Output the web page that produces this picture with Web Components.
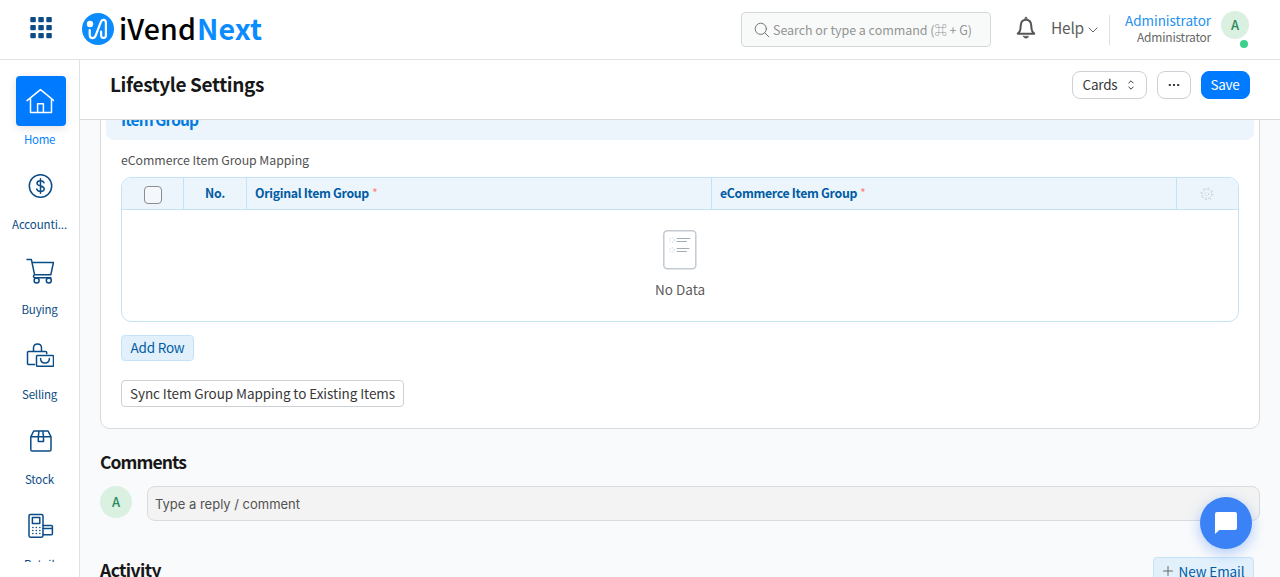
<!DOCTYPE html>
<html lang="en">
<head>
<meta charset="utf-8">
<title>Lifestyle Settings</title>
<style>
    html, body { margin: 0; height: 100%; overflow: hidden; }
    body {
        font-family: "Noto Sans CJK SC", "Noto Sans", sans-serif;
        font-size: 13px;
        line-height: 20px;
        color: #383838;
        background: #f9fafc;
    }
</style>
</head>
<body>
<app-shell>
    <app-header slot="header"></app-header>
    <side-bar slot="side">
        <nav-item icon="home" width="31" active>Home</nav-item>
        <nav-item icon="dollar" width="55">Accounti...</nav-item>
        <nav-item icon="cart" width="36">Buying</nav-item>
        <nav-item icon="bags" width="35">Selling</nav-item>
        <nav-item icon="box" width="29">Stock</nav-item>
        <nav-item icon="pos" width="31">Retail</nav-item>
    </side-bar>
    <page-head slot="head">
        <fit-text width="154">Lifestyle Settings</fit-text>
        <ui-button slot="actions" kind="round" style="width:75px;padding-right:3px"><fit-text width="35">Cards</fit-text><ui-icon name="sort"></ui-icon></ui-button>
        <ui-button slot="actions" kind="round" style="width:34px"><ui-icon name="dots"></ui-icon></ui-button>
        <ui-button slot="actions" kind="primary" style="width:49px;padding-right:1px"><fit-text width="29">Save</fit-text></ui-button>
    </page-head>
    <form-section>
        <fit-text slot="title" width="77">Item Group</fit-text>
        <fit-text slot="label" width="188">eCommerce Item Group Mapping</fit-text>
        <data-grid></data-grid>
        <ui-button slot="buttons" kind="soft" style="width:73px"><fit-text width="54">Add Row</fit-text></ui-button>
        <ui-button slot="buttons" kind="plain" style="width:283px"><fit-text width="265">Sync Item Group Mapping to Existing Items</fit-text></ui-button>
    </form-section>
    <page-footer></page-footer>
    <chat-button slot="chat"></chat-button>
</app-shell>

<script>
const ICONS = {
    home: [28, 28, `<path d="M1 13.6 14.5 2.6 28 13.6M4.5 11.500v14.100h21V11.500M11.6 25.6v-8.8h5.8v8.8" />`],
    dollar: [28, 28, `<circle cx="14.5" cy="14" r="11.2"/><path d="M18 10.8c-.5-1.3-1.8-2-3.5-2-2 0-3.5 1-3.5 2.5 0 3.7 7.2 1.8 7.2 5.5 0 1.6-1.6 2.6-3.6 2.6-2 0-3.4-.9-3.8-2.4M14.5 6.8v14.4"/>`],
    cart: [28, 28, `<path d="M1 2.6h4.4l3.2 15.2h16.2L27.4 5.6H6M8.6 17.8C7 18 7 20.8 9 20.8h15.8"/><circle cx="10.6" cy="23.4" r="2.5"/><circle cx="22.8" cy="23.4" r="2.5"/>`],
    bags: [28, 28, `<path d="M8.5 22.6H2.6c-.7 0-1.1-.4-1.1-1.1V10.6c0-.7.4-1.1 1.1-1.1h17c.7 0 1.1.4 1.1 1.1v1.2M7.5 9.5V6c0-5.4 8-5.4 8 0v3.5"/><rect x="10.5" y="13.6" width="17" height="10.6" rx=".8"/><path d="M14.6 16.4c.2 6 8.6 6 8.8 0"/>`],
    box: [28, 28, `<path d="M4.8 9.8 7.7 4h14.4l2.9 5.8v12.6c0 .9-.5 1.6-1.4 1.6H6.200c-.9 0-1.4-.7-1.4-1.6zM4.8 9.8H25M13 4l-.7 5.6v5h5.200v-5L16.800 4"/>`],
    pos: [28, 28, `<rect x="3" y="2.6" width="14" height="22.6" rx="1.4"/><rect x="6.4" y="5.6" width="7.4" height="6"/><path d="M17 13.4h8.4c.6 0 1 .4 1 1v7.4c0 .6-.4 1-1 1H17M17 16.4h9.4"/><path stroke-dasharray=".1 3.400" d="M6.8 15.4h7.500M6.8 18.4h7.500M6.8 21.6h7.500"/>`],
    grid: [22, 22, `<g fill="currentColor" stroke="none">${[0, 8, 16].map(y => [0, 8, 16].map(x => `<rect x="${x + .3}" y="${y}" width="5.5" height="5.2" rx="1"/>`).join('')).join('')}</g>`],
    search: [16, 16, `<circle cx="6.8" cy="6.8" r="5.6"/><path d="m10.8 10.8 4 4"/>`],
    bell: [20, 24, `<path d="M1.8 17.7h16.4c-1.8-1.2-2.4-2.6-2.6-4.6l-.4-4C14.9 5.6 12.700 3.7 10 3.7S5.100 5.6 4.800 9.1l-.4 4c-.2 2-.8 3.4-2.600 4.6z" stroke-width="2"/><path d="M8.700 2.400a1.300 1.300 0 0 1 2.600 0zM7.300 20.200h5.400c-.4 1.300-1.400 2-2.700 2s-2.300-.7-2.700-2z" fill="currentColor" stroke-width=".5"/>`],
    down: [10, 6, `<path d="m1 1 4 4 4-4"/>`],
    sort: [6, 10, `<path d="m.8 3 2.200-2.200L5.200 3M.8 7 3 9.200 5.200 7"/>`],
    dots: [12, 4, `<g fill="currentColor" stroke="none"><rect x=".8" y="1" width="2" height="2"/><rect x="5" y="1" width="2" height="2"/><rect x="9.200" y="1" width="2" height="2"/></g>`],
    plus: [10, 10, `<path d="M5 .5v9M.5 5h9"/>`],
    gear: [14, 14, `<g stroke-linecap="butt"><circle cx="7" cy="7" r="5.800" stroke-dasharray="1.500 3.055"/><circle cx="7" cy="7" r="4.600" stroke-dasharray="1 1.400"/><circle cx="7" cy="7" r="1.700" stroke-dasharray="1 1.670"/></g>`],
    list: [34, 40, `<rect x=".8" y=".8" width="32" height="38" rx="3.500" stroke="#c3cad1" stroke-width="1.500"/><g stroke="#a2adb8"><path d="M14 8.500h13M14 11.500h9.500M14 18.500h12M14 21.500h9.500"/><g stroke="#c3cad1" stroke-linecap="butt"><circle cx="9" cy="10" r="2.200" stroke-dasharray="1 1.300"/><circle cx="9" cy="20" r="2.200" stroke-dasharray="1 1.300"/></g></g>`],
    chat: [22, 22, `<path fill="currentColor" stroke="none" d="M2 0h18a2 2 0 0 1 2 2v14a2 2 0 0 1-2 2H4.400L0 22V2a2 2 0 0 1 2-2z"/>`],
    logo: [32, 32, `<circle cx="16" cy="16" r="16" fill="#0a8cff" stroke="none"/><circle cx="8" cy="11" r="3.200" fill="#fff" stroke="none"/><path stroke="#fff" stroke-width="2.200" d="M7.700 17v4.500c0 4.800 4.500 4.400 6 1l5.200-13.600c1.300-3.200 5-2.500 5 1V22.500c0 3-4.800 3.500-4.800 0v-4"/>`]
};

class UiIcon extends HTMLElement {
    constructor() {
        super();
        this.attachShadow({ mode: "open" });
    }

    connectedCallback() {
        const [w, h, body] = ICONS[this.getAttribute("name")];
        this.shadowRoot.innerHTML = `
        <style>
            :host { display: block; flex: none; width: ${w}px; height: ${h}px; }
            svg { display: block; fill: none; stroke: currentColor; stroke-width: var(--stroke, 1); stroke-linecap: round; stroke-linejoin: round; }
        </style>
        <svg width="${w}" height="${h}" viewBox="0 0 ${w} ${h}">${body}</svg>`;
    }
}

// One line of text, tracked so that it fills the given width
class FitText extends HTMLElement {
    constructor() {
        super();
        this.attachShadow({ mode: "open" }).innerHTML = `
        <style>
            :host { display: block; flex: none; white-space: nowrap; }
            span { display: inline-block; transform: translateY(var(--rise, -1px)); }
        </style>
        <span><slot></slot></span>`;
    }

    connectedCallback() {
        const width = Number(this.getAttribute("width"));
        const span = this.shadowRoot.querySelector("span");
        const natural = span.getBoundingClientRect().width;
        const count = this.textContent.length;
        this.style.width = `${width}px`;
        span.style.letterSpacing = `${(width - natural) / count}px`;
    }
}

class UserAvatar extends HTMLElement {
    constructor() {
        super();
        this.attachShadow({ mode: "open" }).innerHTML = `
        <style>
            :host {
                display: flex;
                flex: none;
                align-items: center;
                justify-content: center;
                width: var(--size, 32px);
                height: var(--size, 32px);
                border-radius: 50%;
                background: #daf0e1;
                color: #2b8a5b;
                font-weight: 500;
                font-size: 13px;
            }
        </style>
        <slot></slot>`;
    }
}

class UiButton extends HTMLElement {
    constructor() {
        super();
        this.attachShadow({ mode: "open" }).innerHTML = `
        <style>
            :host {
                display: flex;
                flex: none;
                box-sizing: border-box;
                align-items: center;
                justify-content: center;
                height: 28px;
                border: 1px solid #ced0d6;
                border-radius: 8px;
                background: #fff;
                font-size: 13.500px;
                gap: 10px;
            }
            :host([kind="primary"]) { background: #007bff; border-color: #007bff; color: #fff; }
            :host([kind="soft"]) { height: 26px; border-radius: 4px; border-color: #c4e3f8; background: #e2f0fc; color: #005ca3; }
            :host([kind="plain"]) { height: 27px; border-radius: 4px; }
        </style>
        <slot></slot>`;
    }
}

class AppHeader extends HTMLElement {
    constructor() {
        super();
        this.attachShadow({ mode: "open" }).innerHTML = `
        <style>
            :host {
                display: flex;
                box-sizing: border-box;
                height: 60px;
                padding: 0 31px 0 30px;
                border-bottom: 1px solid #e2e2e4;
                background: #fff;
            }
            .apps { color: #0b4c86; margin-top: 17px; }
            .logo { margin: 13px 5px 0 30px; }
            .brand { display: flex; margin-top: 9px; font-size: 28.500px; line-height: 40px; font-weight: 500; color: #000; }
            .brand .next { margin-left: 1px; color: #0a8cff; font-weight: 700; }
            .search {
                --rise: 0;
                display: flex;
                box-sizing: border-box;
                align-items: center;
                gap: 3px;
                width: 250px;
                height: 35px;
                margin: 12px 0 0 auto;
                padding-left: 12px;
                border: 1px solid #d5d8da;
                border-radius: 4px;
                background: #f8fafa;
                color: #949494;
                font-size: 12.500px;
            }
            .search ui-icon { color: #777; }
            .bell { margin: 16px 15px 0 25px; color: #555; }
            .help { margin-top: 18px; color: #5e5e5e; font-size: 15.500px; }
            .down { margin: 27px 11px 0 4px; color: #666; }
            .user {
                display: flex;
                flex-direction: column;
                align-items: flex-end;
                height: 30px;
                margin-top: 15px;
                padding-left: 15px;
                border-left: 1px solid #e0e0e2;
                font-size: 12px;
                line-height: 17px;
                color: #666;
            }
            .user .name { --rise: 0; margin-top: -3px; font-size: 13.500px; line-height: 17px; color: #2490ef; }
            .me { position: relative; margin: 11px 0 0 10px; }
            user-avatar { --size: 28px; }
            .dot { position: absolute; left: 19px; top: 29px; width: 8px; height: 8px; border-radius: 50%; background: #3bd08b; }
        </style>
        <ui-icon class="apps" name="grid"></ui-icon>
        <ui-icon class="logo" name="logo"></ui-icon>
        <div class="brand"><fit-text width="77">iVend</fit-text><fit-text class="next" width="65">Next</fit-text></div>
        <div class="search"><ui-icon name="search"></ui-icon><fit-text width="199">Search or type a command (⌘ + G)</fit-text></div>
        <ui-icon class="bell" name="bell"></ui-icon>
        <fit-text class="help" width="33">Help</fit-text>
        <ui-icon class="down" name="down"></ui-icon>
        <div class="user">
            <fit-text class="name" width="86">Administrator</fit-text>
            <fit-text width="74">Administrator</fit-text>
        </div>
        <div class="me"><user-avatar>A</user-avatar><div class="dot"></div></div>`;
    }
}

class NavItem extends HTMLElement {
    constructor() {
        super();
        this.attachShadow({ mode: "open" });
    }

    connectedCallback() {
        this.shadowRoot.innerHTML = `
        <style>
            :host {
                display: flex;
                flex: none;
                flex-direction: column;
                align-items: center;
                gap: 4px;
                height: 85px;
                color: #0b4c86;
                font-size: 11.500px;
            }
            .tile {
                display: flex;
                align-items: center;
                justify-content: center;
                width: 50px;
                height: 50px;
                margin-left: 2px;
                border-radius: 4px;
                --stroke: 1.500;
            }
            .tile ui-icon { margin-right: 2px; }
            :host([active]) { color: #0a84ff; }
            :host([active]) .tile { background: #007bff; color: #fff; box-shadow: 0 2px 8px rgba(0, 0, 0, .12); }
        </style>
        <div class="tile"><ui-icon name="${this.getAttribute("icon")}"></ui-icon></div>
        <fit-text width="${this.getAttribute("width")}">${this.textContent}</fit-text>`;
    }
}

class SideBar extends HTMLElement {
    constructor() {
        super();
        this.attachShadow({ mode: "open" }).innerHTML = `
        <style>
            :host { display: block; box-sizing: border-box; width: 80px; background: #fff; border-right: 1px solid #e0e2e5; }
            nav { display: flex; flex-direction: column; box-sizing: border-box; height: 502px; padding-top: 16px; overflow: hidden; }
        </style>
        <nav><slot></slot></nav>`;
    }
}

class PageHead extends HTMLElement {
    constructor() {
        super();
        this.attachShadow({ mode: "open" }).innerHTML = `
        <style>
            :host {
                display: flex;
                flex: none;
                box-sizing: border-box;
                justify-content: space-between;
                height: 60px;
                padding: 11px 30px 0;
                border-bottom: 1px solid #d9dbdf;
                background: #fff;
            }
            .title { font-size: 19px; line-height: 28px; font-weight: 700; color: #171717; }
            .actions { display: flex; gap: 10px; }
        </style>
        <div class="title"><slot></slot></div>
        <div class="actions"><slot name="actions"></slot></div>`;
    }
}

class FormSection extends HTMLElement {
    constructor() {
        super();
        this.attachShadow({ mode: "open" }).innerHTML = `
        <style>
            :host {
                display: block;
                box-sizing: border-box;
                height: 339px;
                margin-top: -30px;
                padding: 5px;
                border: 1px solid #d8dadd;
                border-radius: 10px;
                background: #fff;
            }
            .title {
                box-sizing: border-box;
                height: 44px;
                padding: 14px 15px 0;
                border-radius: 8px;
                background: #ecf4fc;
                color: #007be0;
                font-size: 15.500px;
                font-weight: 700;
            }
            .body { padding: 10px 15px 0; }
            .label { --rise: 0; margin-bottom: 7px; color: #525252; font-size: 12.300px; }
            .buttons { display: flex; flex-direction: column; gap: 19px; margin-top: 13px; }
        </style>
        <div class="title"><slot name="title"></slot></div>
        <div class="body">
            <div class="label"><slot name="label"></slot></div>
            <slot></slot>
            <div class="buttons"><slot name="buttons"></slot></div>
        </div>`;
    }
}

class DataGrid extends HTMLElement {
    constructor() {
        super();
        this.attachShadow({ mode: "open" }).innerHTML = `
        <style>
            :host {
                display: block;
                box-sizing: border-box;
                height: 145px;
                border: 1px solid #c4e3f8;
                border-radius: 10px;
                overflow: hidden;
            }
            .head {
                display: grid;
                grid-template-columns: 62px 63px 465px 465px 1fr;
                height: 31px;
                border-bottom: 1px solid #c4e3f8;
                background: #ecf4fc;
                color: #005ca3;
                font-size: 12.300px;
                font-weight: 700;
            }
            .head > div { display: flex; align-items: center; gap: 3px; padding-left: 8px; border-right: 1px solid #c4e3f8; }
            .head > div.mid { justify-content: center; padding: 0; }
            .head > div:last-child { border: 0; }
            .check { width: 16px; height: 16px; margin-top: 3px; border: 1px solid #8d8d8d; border-radius: 4px; background: #f4f7fb; }
            i { margin-top: -1px; color: #ff7a7a; font-style: normal; font-weight: 400; }
            .gear { color: #bcc2c9; }
            .gear ui-icon { margin-right: 1px; }
            .empty { display: flex; flex-direction: column; align-items: center; gap: 10px; padding-top: 20px; color: #5c5c5c; font-size: 13.500px; }
        </style>
        <div class="head">
            <div class="mid"><div class="check"></div></div>
            <div class="mid"><fit-text width="20">No.</fit-text></div>
            <div><fit-text width="114">Original Item Group</fit-text><i>*</i></div>
            <div><fit-text width="137">eCommerce Item Group</fit-text><i>*</i></div>
            <div class="mid gear"><ui-icon name="gear"></ui-icon></div>
        </div>
        <div class="empty"><ui-icon name="list"></ui-icon><fit-text width="50">No Data</fit-text></div>`;
    }
}

class PageFooter extends HTMLElement {
    constructor() {
        super();
        this.attachShadow({ mode: "open" }).innerHTML = `
        <style>
            :host { display: block; padding-top: 22px; }
            .heading { font-size: 17.500px; line-height: 24px; font-weight: 700; color: #171717; }
            .reply { display: flex; gap: 15px; margin-top: 11px; }
            .input {
                --rise: 0;
                flex: 1;
                box-sizing: border-box;
                height: 35px;
                padding: 7px 7px;
                border: 1px solid #d9dbdf;
                border-radius: 8px;
                background: #f3f3f3;
                color: #525252;
                font-family: Inter, sans-serif;
                font-size: 13px;
            }
            .activity { --rise: 0; display: flex; justify-content: space-between; margin-top: 36px; padding-right: 6px; }
            .activity .heading { margin-top: 1px; }
            ui-button { width: 101px; height: 28px; gap: 6px; }
            ui-button ui-icon { color: #666; }
        </style>
        <fit-text class="heading" width="86">Comments</fit-text>
        <div class="reply">
            <user-avatar>A</user-avatar>
            <div class="input"><fit-text width="145">Type a reply / comment</fit-text></div>
        </div>
        <div class="activity">
            <fit-text class="heading" width="61">Activity</fit-text>
            <ui-button kind="soft"><ui-icon name="plus"></ui-icon><fit-text width="66">New Email</fit-text></ui-button>
        </div>`;
    }
}

class ChatButton extends HTMLElement {
    constructor() {
        super();
        this.attachShadow({ mode: "open" }).innerHTML = `
        <style>
            :host {
                position: absolute;
                right: 28px;
                bottom: 28px;
                display: flex;
                align-items: center;
                justify-content: center;
                width: 52px;
                height: 52px;
                border-radius: 50%;
                background: #3b82f6;
                color: #fff;
                box-shadow: 0 4px 14px rgba(59, 130, 246, .4);
            }
        </style>
        <ui-icon name="chat"></ui-icon>`;
    }
}

class AppShell extends HTMLElement {
    constructor() {
        super();
        this.attachShadow({ mode: "open" }).innerHTML = `
        <style>
            :host { display: grid; position: relative; grid-template: 60px 1fr / 80px 1fr; height: 577px; overflow: hidden; }
            header { grid-column: 1 / 3; }
            aside { display: grid; min-height: 0; }
            main { display: flex; flex-direction: column; min-height: 0; }
            .scroll { flex: 1; min-height: 0; padding: 0 20px; overflow: hidden; }
        </style>
        <header><slot name="header"></slot></header>
        <aside><slot name="side"></slot></aside>
        <main>
            <slot name="head"></slot>
            <div class="scroll"><slot></slot></div>
        </main>
        <slot name="chat"></slot>`;
    }
}

customElements.define('app-shell', AppShell);
customElements.define('app-header', AppHeader);
customElements.define('side-bar', SideBar);
customElements.define('nav-item', NavItem);
customElements.define('page-head', PageHead);
customElements.define('form-section', FormSection);
customElements.define('data-grid', DataGrid);
customElements.define('page-footer', PageFooter);
customElements.define('chat-button', ChatButton);
customElements.define('user-avatar', UserAvatar);
customElements.define('ui-button', UiButton);
customElements.define('ui-icon', UiIcon);
// last, so that every line is measured with its final font
customElements.define('fit-text', FitText);
</script>
</body>
</html>
